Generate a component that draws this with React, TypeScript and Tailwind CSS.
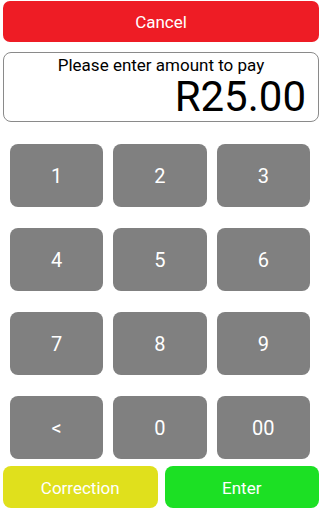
import React from "react";

const keys = ["1", "2", "3", "4", "5", "6", "7", "8", "9", "<", "0", "00"];

export default function App() {
  return (
    <div
      className="w-[323px] h-[512px] bg-white flex flex-col"
      style={{ fontFamily: "Roboto, 'Liberation Sans', sans-serif" }}
    >
      <div className="px-[3px] pt-[1px] pr-[4px]">
        <button className="w-full h-[41px] pt-[2px] rounded-[7px] bg-[#ee1c25] text-white text-[17px] flex items-center justify-center">
          Cancel
        </button>
        <div className="mt-[10px] h-[70px] rounded-[8px] border border-[#8a8a8a] flex flex-col">
          <div className="text-center text-[17px] leading-[20px] pt-[2px] text-black">
            Please enter amount to pay
          </div>
          <div className="text-right text-[42px] leading-[44px] pr-[12px] text-black">
            R25.00
          </div>
        </div>
      </div>
      <div className="grid grid-cols-3 gap-x-[10px] gap-y-[21px] pl-[10px] pr-[13px] mt-[22px]">
        {keys.map((k) => (
          <button
            key={k}
            className="h-[63px] rounded-[8px] bg-[#808080] text-white text-[20px] flex items-center justify-center"
          >
            {k}
          </button>
        ))}
      </div>
      <div className="flex gap-[7px] px-[3px] pr-[4px] mt-[7px]">
        <button className="flex-1 h-[42px] pt-[3px] rounded-[8px] bg-[#e0e01c] text-white text-[17px] flex items-center justify-center">
          Correction
        </button>
        <button className="flex-1 h-[42px] pt-[3px] rounded-[8px] bg-[#1ce024] text-white text-[17px] flex items-center justify-center">
          Enter
        </button>
      </div>
    </div>
  );
}
